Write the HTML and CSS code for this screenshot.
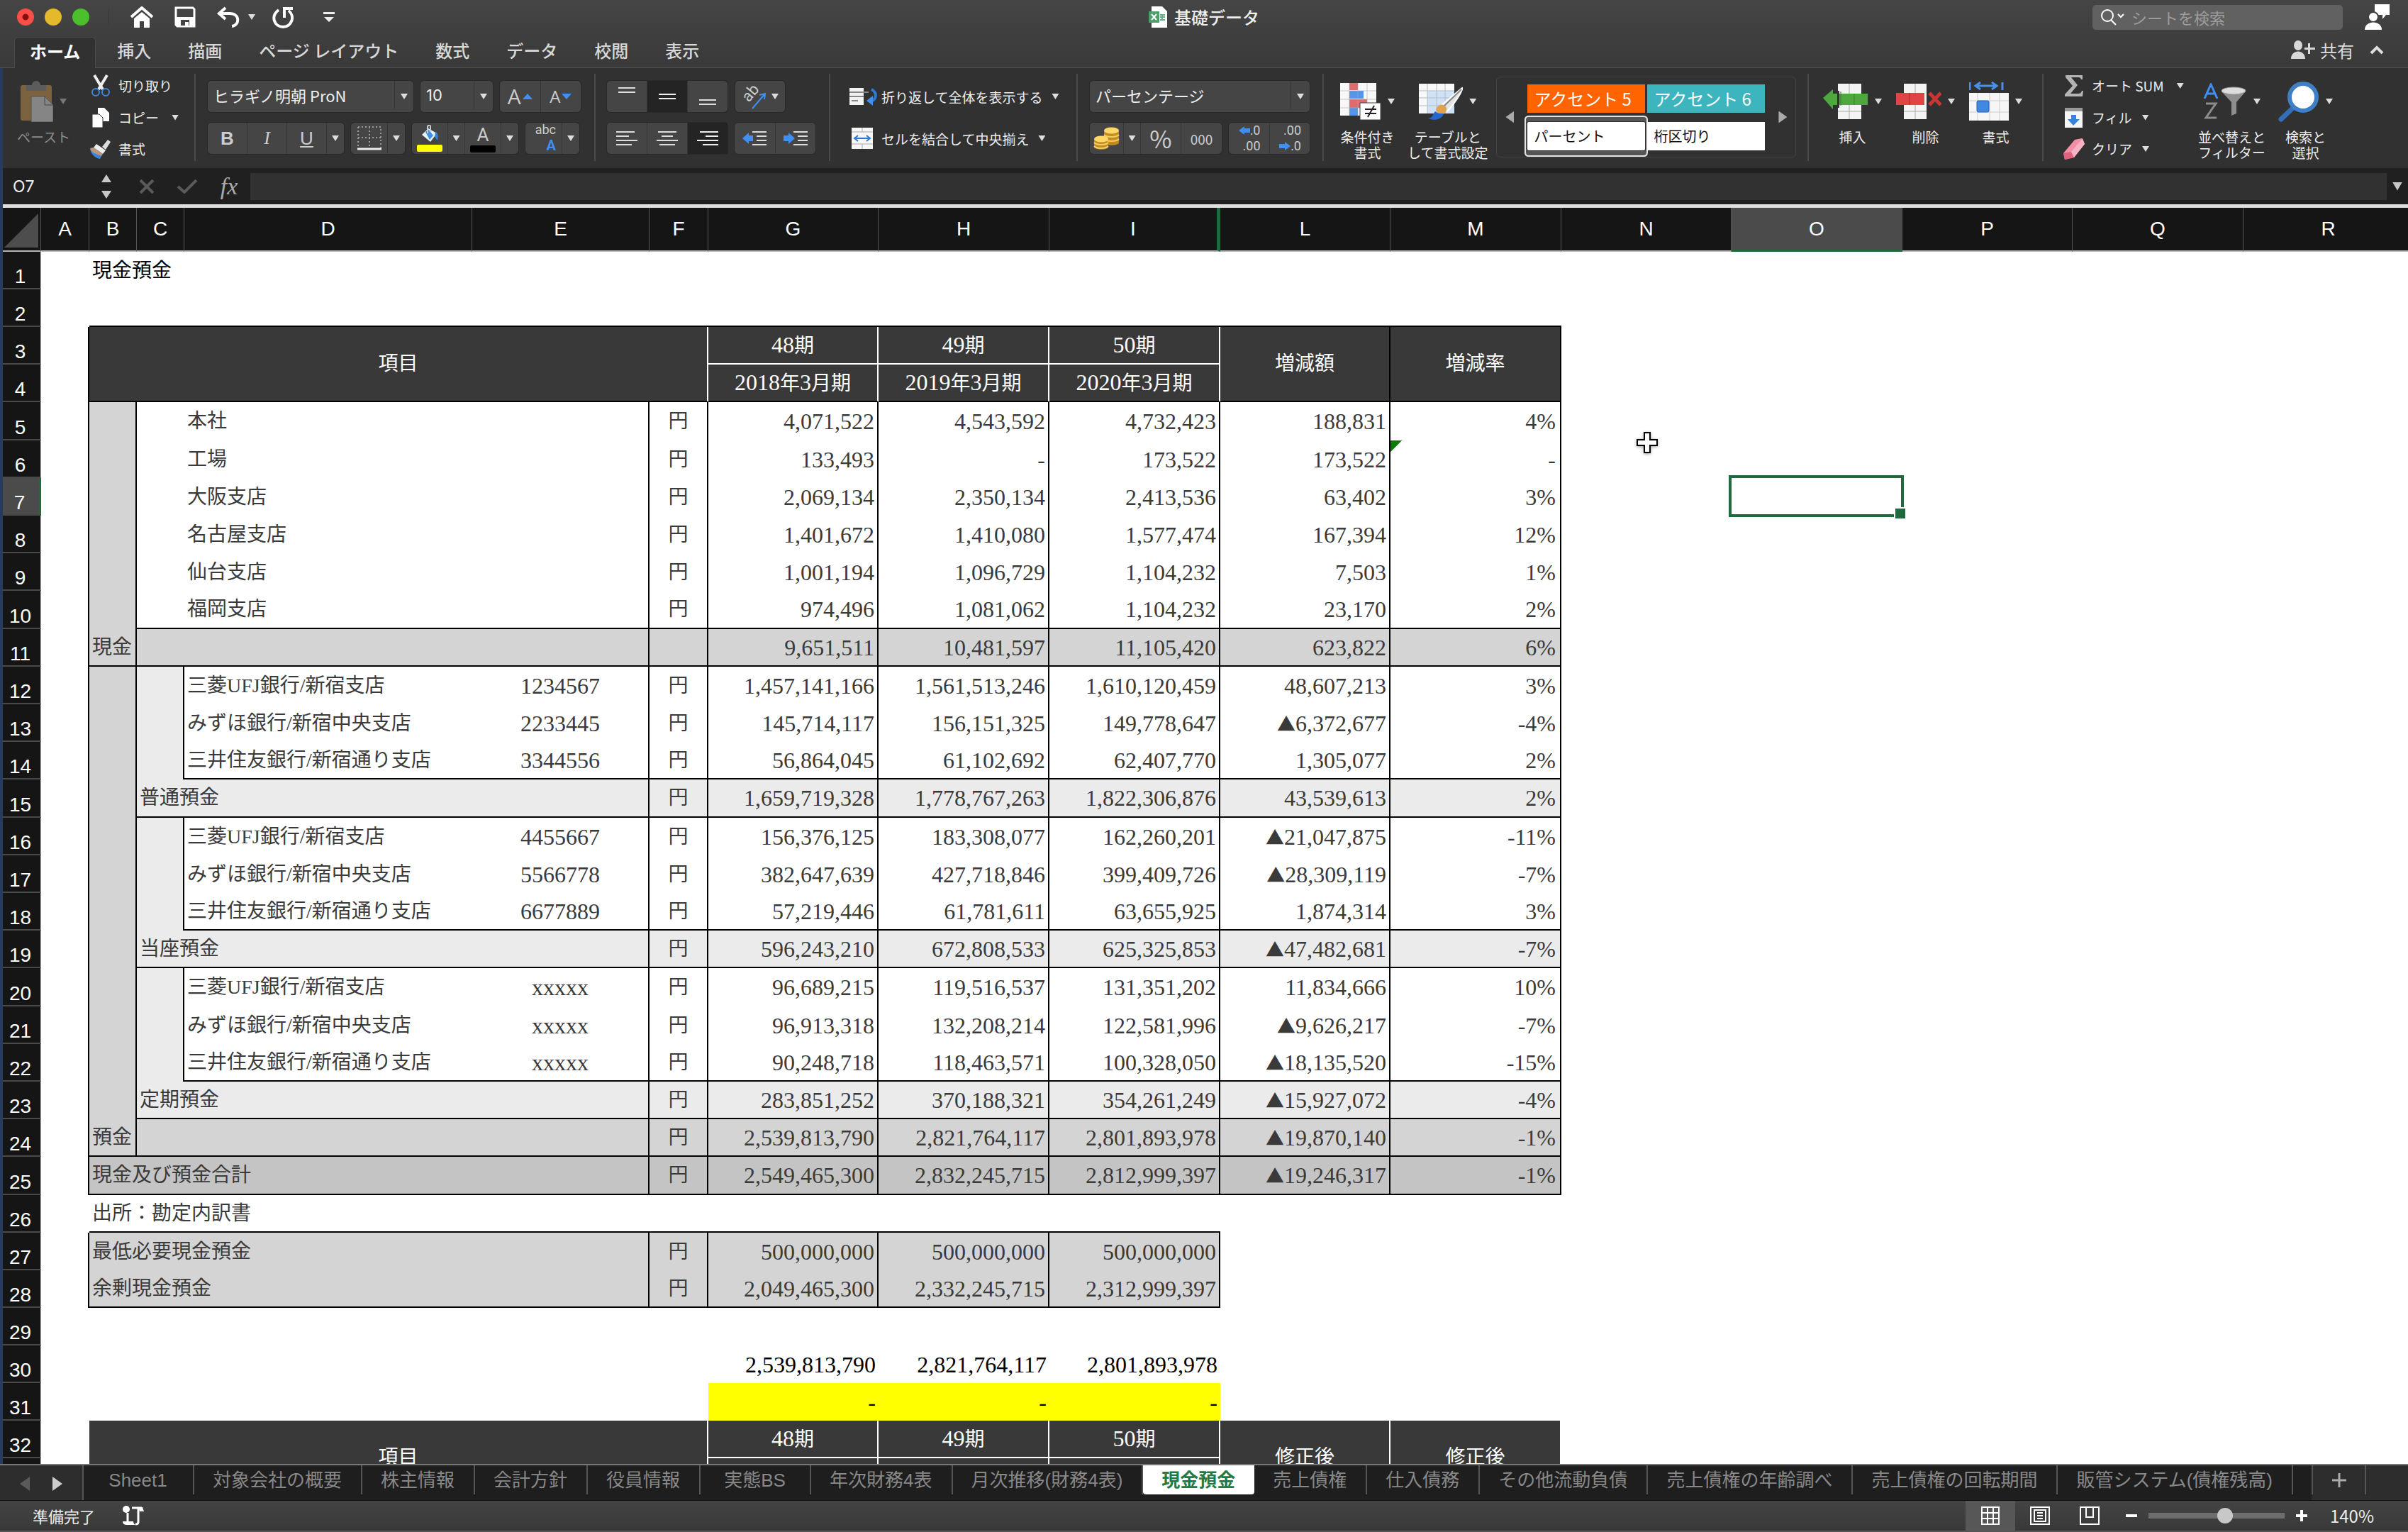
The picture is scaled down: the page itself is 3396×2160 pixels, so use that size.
FILE: index.html
```html
<!DOCTYPE html>
<html lang="ja">
<head>
<meta charset="utf-8">
<title>基礎データ</title>
<link rel="stylesheet" href="styles.css">
</head>
<body>
<div class="app">
<header class="titlebar">
  <div class="quick">
    <div class="lights"><span class="light red"></span><span class="light amber"></span><span class="light green"></span></div>
    <button aria-label="ホーム"><svg width="32" height="30" viewBox="0 0 32 30"><path d="M1 15 16 2l15 13" fill="none" stroke="#fff" stroke-width="4"/><path d="M5 17 16 8l11 9v13h-8v-9h-6v9H5z" fill="#fff"/></svg></button>
    <button aria-label="保存"><svg width="30" height="30" viewBox="0 0 30 30"><path d="M3 2h23l2 2v24H4l-2-2V2z" fill="none" stroke="#fff" stroke-width="3"/><path d="M2 15h26v13H2z" fill="#fff"/><path d="M9 19h12v8H9z" fill="#444"/><path d="M15 22h5v6h-5z" fill="#fff"/></svg></button>
    <button class="with-tri" aria-label="元に戻す"><svg width="32" height="30" viewBox="0 0 32 30"><path d="M12 2 3 10l9 8M4 10h14c15 0 14 17 3 18" fill="none" stroke="#fff" stroke-width="4"/></svg><span class="tri"></span></button>
    <button aria-label="やり直し"><svg width="32" height="32" viewBox="0 0 32 32"><path d="M9 6C-3 15 3 30 15 30s18-15 8-23" fill="none" stroke="#fff" stroke-width="4"/><path d="M15 2h14v4H19v11h-4z" fill="#fff"/></svg></button>
    <button class="custom" aria-label="カスタマイズ"><svg width="16" height="16" viewBox="0 0 16 16"><path d="M0 1h16v3H0zM1 8h14l-7 7z" fill="#eee"/></svg></button>
  </div>
  <h1 class="doc"><svg width="26" height="30" viewBox="0 0 26 30"><path d="M4 0h15l7 7v23H4z" fill="#fff"/><path d="M0 7h15v16H0z" fill="#4f9d6c"/><path d="m4 11 7 8m0-8-7 8" stroke="#fff" stroke-width="2"/><path d="M16 12h7M16 15h7M16 19h7M19 11v9" stroke="#6aab82" stroke-width="2"/></svg>基礎データ</h1>
  <div class="right">
    <label class="search"><svg width="36" height="26" viewBox="0 0 36 26"><circle cx="11" cy="11" r="8" fill="none" stroke="#fff" stroke-width="2"/><path d="m16 17 7 7M26 9l4 4 4-4" fill="none" stroke="#fff" stroke-width="2"/></svg><input type="search" placeholder="シートを検索" aria-label="シートを検索"></label>
    <button aria-label="アカウント"><svg width="36" height="36" viewBox="0 0 36 36"><path d="M14 0h21v15h-5l-5 6v-6H14z" fill="#fff"/><circle cx="12" cy="18" r="7" fill="#fff" stroke="#414141" stroke-width="2"/><path d="M0 36c0-14 24-14 24 0z" fill="#fff"/></svg></button>
  </div>
</header>
<nav class="ribbon-tabs">
  <a class="rtab on" href="#home">ホーム</a><a class="rtab" href="#insert">挿入</a><a class="rtab" href="#draw">描画</a><a class="rtab" href="#layout">ページ レイアウト</a><a class="rtab" href="#formula">数式</a><a class="rtab" href="#data">データ</a><a class="rtab" href="#review">校閲</a><a class="rtab" href="#view">表示</a>
  <button class="share"><svg width="34" height="26" viewBox="0 0 34 26"><ellipse cx="10" cy="7" rx="6" ry="7" fill="#d8d8d8"/><path d="M0 26c0-14 20-14 20 0zM24 4h3v6h7v3h-7v6h-3v-6h-5v-3h5z" fill="#d8d8d8"/></svg>共有</button>
  <button class="fold" aria-label="リボンを折りたたむ"><svg width="20" height="14" viewBox="0 0 20 14"><path d="m2 12 8-8 8 8" fill="none" stroke="#ddd" stroke-width="4"/></svg></button>
</nav>
<main class="work">
<section class="ribbon">
  <div class="group clip">
    <button class="big dim"><span class="top"><svg width="46" height="58" viewBox="0 0 46 58"><rect y="6" width="44" height="50" rx="3" fill="#7d6240"/><path d="M8 6h8a6 6 0 0 1 12 0h8v8H8z" fill="#5c5c5c"/><path d="M15 22h19l12 12v24H15z" fill="#858585" stroke="#555"/><path d="M34 22v12h12" fill="none" stroke="#444"/></svg><span class="tri"></span></span>ペースト</button>
    <div class="list">
      <button><svg width="28" height="32" viewBox="0 0 28 32"><path d="m5 1 12 20M23 1 11 21" stroke="#eee" stroke-width="4"/><circle cx="7" cy="25" r="5" fill="none" stroke="#3f87dd" stroke-width="2"/><circle cx="21" cy="25" r="5" fill="none" stroke="#3f87dd" stroke-width="2"/></svg>切り取り</button>
      <button><svg width="28" height="28" viewBox="0 0 28 28"><path d="M10 0h9l7 7v12H10z" fill="#fff"/><path d="M2 9h10l5 5v14H2z" fill="#fff" stroke="#333"/></svg>コピー<span class="tri far"></span></button>
      <button><svg width="30" height="28" viewBox="0 0 30 28"><path d="m17 11 8-10 4 3-7 11z" fill="#ddd"/><path d="m9 7 13 9-4 5L5 12z" fill="#eee"/><path d="m5 12 13 9-4 6C8 26 2 22 0 13z" fill="#b9977c"/><path d="M0 13c3 8 8 7 16 11l-2 4C8 27 1 22 0 13z" fill="#3b85dd"/></svg>書式</button>
    </div>
  </div>
  <div class="group font">
    <div class="line">
      <div class="combo name"><select aria-label="フォント"><option>ヒラギノ明朝 ProN</option></select></div>
      <div class="combo size"><select aria-label="フォント サイズ"><option>10</option></select></div>
      <div class="seg w114"><button aria-label="拡大" class="letter">A<svg width="14" height="8" viewBox="0 0 14 8"><path d="M0 8 7 0l7 8z" fill="#3f8ff5"/></svg></button><button aria-label="縮小" class="letter small">A<svg width="14" height="8" viewBox="0 0 14 8"><path d="M0 0h14L7 8z" fill="#3f8ff5"/></svg></button></div>
    </div>
    <div class="line">
      <div class="seg biu"><button class="glyph"><b>B</b></button><button class="glyph"><i>I</i></button><button class="glyph"><u>U</u></button><button class="drop" aria-label="下線"><span class="tri"></span></button></div>
      <div class="seg w76"><button aria-label="罫線"><svg width="34" height="34" viewBox="0 0 34 34"><path d="M1 1h32v30M1 1v30M17 1v30M1 16h32" fill="none" stroke="#999" stroke-width="2" stroke-dasharray="2 3"/><path d="M0 32h34" stroke="#eee" stroke-width="3"/></svg></button><button class="drop" aria-label="罫線の種類"><span class="tri"></span></button></div>
      <div class="seg w150"><button aria-label="塗りつぶし"><svg width="36" height="38" viewBox="0 0 36 38"><path d="m7 14 9-9 12 7-9 12z" fill="#e8f2fb"/><path d="m12 10 6 11 5-6-7-9z" fill="#3f8fe8"/><path d="M15 12V2q3-3 4 0v8" fill="none" stroke="#ccc" stroke-width="2"/><path d="M26 10c4 1 4 6 3 12l-4-5z" fill="#3382dc"/><rect y="28" width="36" height="10" rx="2" fill="#ff0"/></svg></button><button class="drop" aria-label="塗りつぶしの色"><span class="tri"></span></button><button class="color-a" aria-label="文字色">A<span class="black-bar"></span></button><button class="drop" aria-label="文字の色"><span class="tri"></span></button></div>
      <div class="seg w76"><button class="abc" aria-label="ふりがな"><span>abc</span><b>A</b></button><button class="drop" aria-label="ふりがなの設定"><span class="tri"></span></button></div>
    </div>
  </div>
  <div class="group align">
    <div class="line">
      <div class="seg w170"><button aria-label="上揃え"><svg width="24" height="34" viewBox="0 0 24 34"><path d="M0 5h24M0 11h24" stroke="#ddd" stroke-width="2"/></svg></button><button class="on" aria-label="上下中央揃え"><svg width="24" height="34" viewBox="0 0 24 34"><path d="M0 14h24M0 20h24" stroke="#eee" stroke-width="2"/></svg></button><button aria-label="下揃え"><svg width="24" height="34" viewBox="0 0 24 34"><path d="M0 22h24M0 28h24" stroke="#ddd" stroke-width="2"/></svg></button></div>
      <div class="seg w70"><button class="orient" aria-label="方向"><svg width="36" height="38" viewBox="0 0 36 38"><text x="10" y="28" transform="rotate(-50 10 28)" font-size="22" fill="#ccc">ab</text><path d="M15 36 33 15M25 17l8-2-1 8" fill="none" stroke="#3f8ff5" stroke-width="2"/></svg><span class="tri"></span></button></div>
    </div>
    <div class="line">
      <div class="seg w170"><button aria-label="左揃え"><svg width="30" height="24" viewBox="0 0 30 24"><path d="M0 3h26M0 9h18M0 15h30M0 21h22" stroke="#ddd" stroke-width="2"/></svg></button><button aria-label="中央揃え"><svg width="30" height="24" viewBox="0 0 30 24"><path d="M2 3h26M7 9h16M0 15h30M4 21h22" stroke="#ddd" stroke-width="2"/></svg></button><button class="on" aria-label="右揃え"><svg width="30" height="24" viewBox="0 0 30 24"><path d="M4 3h26M12 9h18M0 15h30M8 21h22" stroke="#eee" stroke-width="2"/></svg></button></div>
      <div class="seg w114"><button aria-label="インデント解除"><svg width="34" height="24" viewBox="0 0 34 24"><path d="M14 3h20M20 9h14M20 15h14M14 21h20" stroke="#ddd" stroke-width="2"/><path d="m0 12 9-8v4h6v8H9v4z" fill="#3f8ff5"/></svg></button><button aria-label="インデント"><svg width="34" height="24" viewBox="0 0 34 24"><path d="M14 3h20M20 9h14M20 15h14M14 21h20" stroke="#ddd" stroke-width="2"/><path d="m16 12-9-8v4H0v8h7v4z" fill="#3f8ff5"/></svg></button></div>
    </div>
  </div>
  <div class="group wrap">
    <button class="text-btn"><svg width="40" height="28" viewBox="0 0 40 28"><path d="M0 2h20v24H0z" fill="#f2f2f2"/><path d="M0 8h27M0 14h20M3 20h9" stroke="#888" stroke-width="2"/><path d="M31 4c8 4 8 14-1 17" fill="none" stroke="#2f7ad0" stroke-width="4"/><path d="m24 20 9-7v14z" fill="#3f8ff5"/></svg>折り返して全体を表示する<span class="tri"></span></button>
    <button class="text-btn"><svg width="40" height="32" viewBox="0 0 40 32"><path d="M3 1h30v30H3z" fill="#f6f6f6"/><path d="M3 7h30M3 24h30M18 1v6M18 24v7" stroke="#aaa"/><path d="M9 16h18M12 12l-5 4 5 4M24 12l5 4-5 4" fill="none" stroke="#2f7ad0" stroke-width="2"/></svg>セルを結合して中央揃え<span class="tri"></span></button>
  </div>
  <div class="group number">
    <div class="line"><div class="combo format"><select aria-label="表示形式"><option>パーセンテージ</option></select></div></div>
    <div class="line">
      <div class="seg w186"><button aria-label="通貨"><svg width="38" height="32" viewBox="0 0 38 32"><path d="M15 5v17c0 5 21 5 21 0V5z" fill="#c48b1c"/><path d="M1 17v11c0 5 20 5 20 0V17z" fill="#c48b1c"/><path d="M15 11c4 4 17 4 21 0M15 17c4 4 17 4 21 0M1 22c4 4 16 4 20 0M1 27c4 4 16 4 20 0" fill="none" stroke="#f4cf66" stroke-width="2"/><ellipse cx="25.500" cy="5" rx="10.500" ry="4.500" fill="#ffd866"/><ellipse cx="11" cy="17" rx="10" ry="4.500" fill="#ffd866"/></svg></button><button class="drop" aria-label="通貨の種類"><span class="tri"></span></button><button class="pct w57">%</button><button class="zeros w57">000</button></div>
      <div class="seg w114"><button class="dec"><span><svg width="16" height="12" viewBox="0 0 16 12"><path d="m0 6 8-6v3h8v6H8v3z" fill="#3f8ff5"/></svg>.0</span><span>.00</span></button><button class="dec"><span>.00</span><span><svg width="16" height="12" viewBox="0 0 16 12"><path d="M16 6 8 0v3H0v6h8v3z" fill="#3f8ff5"/></svg>.0</span></button></div>
    </div>
  </div>
  <div class="group styles">
    <button class="big"><span class="top"><svg width="58" height="54" viewBox="0 0 58 54"><path d="M0 1h51v46H0z" fill="#f8f8f8"/><path d="M13 1h12v10H13zM13 24h25v12H13z" fill="#e06a6c"/><path d="M13 12h20v11H13zM13 36h12v11H13z" fill="#5796e4"/><path d="M0 12h51M0 24h51M0 36h51M13 1v46M25 1v46M38 1v46" stroke="#aaa" opacity=".6"/><path d="M28 29h29v24H28z" fill="#fff" stroke="#444"/><path d="M35 38h16M35 44h16M48 33l-9 16" stroke="#222" stroke-width="2"/></svg><span class="tri"></span></span>条件付き<br>書式</button>
    <button class="big"><span class="top"><svg width="62" height="54" viewBox="0 0 62 54"><path d="M0 2h50v42H0z" fill="#f8f8f8"/><path d="M12 12h38v32H12z" fill="#cfe2f7"/><path d="M0 12h50M0 22h50M0 33h50M12 2v42M25 2v42M37 2v42" stroke="#b5bcc4"/><path d="M31 33 61 8c2 4-14 26-21 33z" fill="#e4e4e4" stroke="#fff" stroke-width="2"/><path d="m35 34 25-24" stroke="#888" stroke-width="2"/><path d="M24 39c3-10 12-9 15-3 1 6-3 10-10 10z" fill="#e0a352"/><path d="M13 51c7-1 7-7 10-10 5 4 8 3 12 3-2 8-12 11-22 7z" fill="#2468cf"/></svg><span class="tri"></span></span>テーブルと<br>して書式設定</button>
    <div class="gallery"><button class="arrow left" aria-label="前へ"></button>
      <div class="swatches"><button class="sw orange">アクセント 5</button><button class="sw teal">アクセント 6</button><button class="sw plain sel">パーセント</button><button class="sw plain">桁区切り</button></div>
      <button class="arrow rightward" aria-label="次へ"></button></div>
  </div>
  <div class="group cells">
    <button class="big"><span class="top"><svg width="64" height="52" viewBox="0 0 64 52"><path d="M21 1h33v50H21z" fill="#f4f4f4"/><path d="M37 1v50M21 40h33" stroke="#aaa"/><path d="m0 21 14-12v6h49v16H14v6z" fill="#4fa83e"/><path d="M25 12v20M44 15v16" stroke="#3a7f2e" stroke-width="1"/><path d="M20 11h3v24h-3z" fill="#313131"/></svg><span class="tri"></span></span>挿入</button>
    <button class="big"><span class="top"><svg width="64" height="52" viewBox="0 0 64 52"><path d="M11 1h32v50H11z" fill="#f4f4f4"/><path d="M27 1v50M11 40h32" stroke="#aaa"/><path d="M0 14h40v17H0z" fill="#e04444"/><path d="M19 14v17" stroke="#a92c2c"/><path d="m47 14 16 17M63 14 47 31" stroke="#c93434" stroke-width="5"/></svg><span class="tri"></span></span>削除</button>
    <button class="big"><span class="top"><svg width="56" height="56" viewBox="0 0 56 56"><path d="M1 1v11M47 1v11" stroke="#4a90e8" stroke-width="3"/><path d="M10 6h28M16 1 9 6l7 5M32 1l7 5-7 5" fill="none" stroke="#4a90e8" stroke-width="3"/><path d="M0 16h56v39H0z" fill="#f6f6f6"/><path d="M0 27h56M0 43h56M12 16v39M29 16v39M43 16v39" stroke="#ccc"/><rect x="11" y="27" width="17" height="16" rx="2" fill="#4088e0" stroke="#2463b4"/></svg><span class="tri"></span></span>書式</button>
  </div>
  <div class="group editing">
    <div class="list wide">
      <button><svg width="26" height="32" viewBox="0 0 26 32"><path d="M1 1h24v6h-2c-1-3-2-3-5-3H9l9 11L8 27h10c4 0 5-1 6-4h2l-1 8H0v-3l11-12L1 4z" fill="#b4b4b4"/></svg>オート SUM<span class="tri far"></span></button>
      <button><svg width="26" height="30" viewBox="0 0 26 30"><path d="M0 1h25v28H0z" fill="#f6f6f6"/><path d="M0 1h25v5H0z" fill="#999"/><path d="M9 11h7v6h5l-9 9-8-9h5z" fill="#3583dd"/></svg>フィル<span class="tri"></span></button>
      <button><svg width="30" height="32" viewBox="0 0 30 32"><path d="m16 3 10-2 4 8-15 19-13 3-2-9z" fill="#f48da6"/><path d="m0 22 11-2 4 8-13 3z" fill="#e0607f"/><path d="m11 20 16-19 3 8-15 19z" fill="#f7b3c3"/></svg>クリア<span class="tri"></span></button>
    </div>
    <button class="big"><span class="top"><svg width="62" height="52" viewBox="0 0 62 52"><path d="M2 22 11 2l9 20M5 15h12" fill="none" stroke="#3f8ff5" stroke-width="3"/><path d="M4 29h14L4 49h15" fill="none" stroke="#8c8c8c" stroke-width="3"/><path d="M26 12c0-5 34-5 34 0L47 27v16l-7 3V27z" fill="#8e8e8e"/><ellipse cx="43" cy="11" rx="17" ry="5" fill="#ddd" stroke="#999"/></svg><span class="tri"></span></span>並べ替えと<br>フィルター</button>
    <button class="big"><span class="top"><svg width="58" height="58" viewBox="0 0 58 58"><path d="m22 37-18 17" stroke="#336fb8" stroke-width="7" stroke-linecap="round"/><circle cx="35" cy="23" r="19" fill="#fff" stroke="#3f7fc6" stroke-width="6"/></svg><span class="tri"></span></span>検索と<br>選択</button>
  </div>
</section>
<section class="formula">
  <input class="namebox" value="O7" aria-label="名前ボックス">
  <button class="spin" aria-label="名前の一覧"><svg width="16" height="36" viewBox="0 0 16 36"><path d="M1 12 8 1l7 11zM1 24h14L8 35z" fill="#c8c8c8"/></svg></button>
  <button class="cancel" aria-label="キャンセル"><svg width="22" height="20" viewBox="0 0 22 20"><path d="m2 1 18 18M20 1 2 19" stroke="#5a5a5a" stroke-width="4"/></svg></button>
  <button class="ok" aria-label="入力"><svg width="30" height="20" viewBox="0 0 30 20"><path d="m2 10 9 8L28 1" fill="none" stroke="#5a5a5a" stroke-width="4"/></svg></button>
  <button class="fx" aria-label="関数の挿入"><i>fx</i></button>
  <input class="fbar" aria-label="数式バー">
  <button class="expand" aria-label="数式バーの展開"></button>
</section>
<section class="sheet">
<table>
<colgroup><col class="c-row"><col class="c-a"><col class="c-b"><col class="c-b"><col class="c-d"><col class="c-e"><col class="c-f"><col class="c240"><col class="c241"><col class="c241"><col class="c240"><col class="c241"><col class="c240"><col class="c241"><col class="c240"><col class="c241"><col class="c240"></colgroup>
<thead><tr><th class="corner"><svg width="48" height="48" viewBox="0 0 48 48"><path d="M48 0v48H0z" fill="#4d4d4d"/></svg></th><th>A</th><th>B</th><th>C</th><th>D</th><th>E</th><th>F</th><th>G</th><th>H</th><th class="hidden-after">I</th><th>L</th><th>M</th><th>N</th><th class="cur">O</th><th>P</th><th>Q</th><th>R</th></tr></thead>
<tbody>
<tr><th>1</th><td></td><td colspan="4" class="ink">現金預金</td></tr>
<tr><th>2</th><td></td><td colspan="10" class="under"></td></tr>
<tr class="head"><th>3</th><td class="a"></td><td colspan="5" rowspan="2" class="kb">項目</td><td><span class="n">48</span>期</td><td><span class="n">49</span>期</td><td><span class="n">50</span>期</td><td rowspan="2" class="kb kr">増減額</td><td rowspan="2" class="kb kr">増減率</td></tr>
<tr class="head"><th>4</th><td class="a"></td><td class="kb"><span class="n">2018</span>年<span class="n">3</span>月期</td><td class="kb"><span class="n">2019</span>年<span class="n">3</span>月期</td><td class="kb"><span class="n">2020</span>年<span class="n">3</span>月期</td></tr>
<tr class="t tall"><th>5</th><td class="a"></td><td class="b"></td><td class="blank"></td><td colspan="2">本社</td><td class="u">円</td><td class="r">4,071,522</td><td class="r">4,543,592</td><td class="r">4,732,423</td><td class="r">188,831</td><td class="r p">4%</td></tr>
<tr class="t"><th>6</th><td class="a"></td><td class="b"></td><td class="blank"></td><td colspan="2">工場</td><td class="u">円</td><td class="r">133,493</td><td class="r">-</td><td class="r">173,522</td><td class="r">173,522</td><td class="r p flag">-</td><td class="free host"><svg class="cursor" width="34" height="34" viewBox="0 0 34 34"><path d="M13 3h8v10h10v8H21v10h-8V21H3v-8h10z" fill="#fff" stroke="#000" stroke-width="2"/></svg></td></tr>
<tr class="t"><th class="cur">7</th><td class="a"></td><td class="b"></td><td class="blank"></td><td colspan="2">大阪支店</td><td class="u">円</td><td class="r">2,069,134</td><td class="r">2,350,134</td><td class="r">2,413,536</td><td class="r">63,402</td><td class="r p">3%</td><td class="free"></td><td class="free host"><div class="selection"></div></td></tr>
<tr class="t"><th>8</th><td class="a"></td><td class="b"></td><td class="blank"></td><td colspan="2">名古屋支店</td><td class="u">円</td><td class="r">1,401,672</td><td class="r">1,410,080</td><td class="r">1,577,474</td><td class="r">167,394</td><td class="r p">12%</td></tr>
<tr class="t"><th>9</th><td class="a"></td><td class="b"></td><td class="blank"></td><td colspan="2">仙台支店</td><td class="u">円</td><td class="r">1,001,194</td><td class="r">1,096,729</td><td class="r">1,104,232</td><td class="r">7,503</td><td class="r p">1%</td></tr>
<tr class="t tall rule"><th>10</th><td class="a"></td><td class="b nb"></td><td class="blank"></td><td colspan="2">福岡支店</td><td class="u">円</td><td class="r">974,496</td><td class="r">1,081,062</td><td class="r">1,104,232</td><td class="r">23,170</td><td class="r p">2%</td></tr>
<tr class="t rule mid"><th>11</th><td class="a"></td><td>現金</td><td colspan="3"></td><td></td><td class="r">9,651,511</td><td class="r">10,481,597</td><td class="r">11,105,420</td><td class="r">623,822</td><td class="r p">6%</td></tr>
<tr class="t"><th>12</th><td class="a"></td><td class="b"></td><td class="c"></td><td class="blank">三菱UFJ銀行/新宿支店</td><td class="u no">1234567</td><td class="u">円</td><td class="r">1,457,141,166</td><td class="r">1,561,513,246</td><td class="r">1,610,120,459</td><td class="r">48,607,213</td><td class="r p">3%</td></tr>
<tr class="t"><th>13</th><td class="a"></td><td class="b"></td><td class="c"></td><td class="blank">みずほ銀行/新宿中央支店</td><td class="u no">2233445</td><td class="u">円</td><td class="r">145,714,117</td><td class="r">156,151,325</td><td class="r">149,778,647</td><td class="r"><span class="neg">▲</span>6,372,677</td><td class="r p">-4%</td></tr>
<tr class="t rule"><th>14</th><td class="a"></td><td class="b nb"></td><td class="c nb"></td><td class="blank">三井住友銀行/新宿通り支店</td><td class="u no">3344556</td><td class="u">円</td><td class="r">56,864,045</td><td class="r">61,102,692</td><td class="r">62,407,770</td><td class="r">1,305,077</td><td class="r p">2%</td></tr>
<tr class="t tall rule light"><th>15</th><td class="a"></td><td class="b nb"></td><td colspan="3">普通預金</td><td class="u">円</td><td class="r">1,659,719,328</td><td class="r">1,778,767,263</td><td class="r">1,822,306,876</td><td class="r">43,539,613</td><td class="r p">2%</td></tr>
<tr class="t"><th>16</th><td class="a"></td><td class="b"></td><td class="c"></td><td class="blank">三菱UFJ銀行/新宿支店</td><td class="u no">4455667</td><td class="u">円</td><td class="r">156,376,125</td><td class="r">183,308,077</td><td class="r">162,260,201</td><td class="r"><span class="neg">▲</span>21,047,875</td><td class="r p">-11%</td></tr>
<tr class="t"><th>17</th><td class="a"></td><td class="b"></td><td class="c"></td><td class="blank">みずほ銀行/新宿中央支店</td><td class="u no">5566778</td><td class="u">円</td><td class="r">382,647,639</td><td class="r">427,718,846</td><td class="r">399,409,726</td><td class="r"><span class="neg">▲</span>28,309,119</td><td class="r p">-7%</td></tr>
<tr class="t rule"><th>18</th><td class="a"></td><td class="b nb"></td><td class="c nb"></td><td class="blank">三井住友銀行/新宿通り支店</td><td class="u no">6677889</td><td class="u">円</td><td class="r">57,219,446</td><td class="r">61,781,611</td><td class="r">63,655,925</td><td class="r">1,874,314</td><td class="r p">3%</td></tr>
<tr class="t rule light"><th>19</th><td class="a"></td><td class="b nb"></td><td colspan="3">当座預金</td><td class="u">円</td><td class="r">596,243,210</td><td class="r">672,808,533</td><td class="r">625,325,853</td><td class="r"><span class="neg">▲</span>47,482,681</td><td class="r p">-7%</td></tr>
<tr class="t tall"><th>20</th><td class="a"></td><td class="b"></td><td class="c"></td><td class="blank">三菱UFJ銀行/新宿支店</td><td class="u no">xxxxx</td><td class="u">円</td><td class="r">96,689,215</td><td class="r">119,516,537</td><td class="r">131,351,202</td><td class="r">11,834,666</td><td class="r p">10%</td></tr>
<tr class="t"><th>21</th><td class="a"></td><td class="b"></td><td class="c"></td><td class="blank">みずほ銀行/新宿中央支店</td><td class="u no">xxxxx</td><td class="u">円</td><td class="r">96,913,318</td><td class="r">132,208,214</td><td class="r">122,581,996</td><td class="r"><span class="neg">▲</span>9,626,217</td><td class="r p">-7%</td></tr>
<tr class="t rule"><th>22</th><td class="a"></td><td class="b nb"></td><td class="c nb"></td><td class="blank">三井住友銀行/新宿通り支店</td><td class="u no">xxxxx</td><td class="u">円</td><td class="r">90,248,718</td><td class="r">118,463,571</td><td class="r">100,328,050</td><td class="r"><span class="neg">▲</span>18,135,520</td><td class="r p">-15%</td></tr>
<tr class="t rule light"><th>23</th><td class="a"></td><td class="b nb"></td><td colspan="3">定期預金</td><td class="u">円</td><td class="r">283,851,252</td><td class="r">370,188,321</td><td class="r">354,261,249</td><td class="r"><span class="neg">▲</span>15,927,072</td><td class="r p">-4%</td></tr>
<tr class="t rule mid"><th>24</th><td class="a"></td><td>預金</td><td colspan="3"></td><td class="u">円</td><td class="r">2,539,813,790</td><td class="r">2,821,764,117</td><td class="r">2,801,893,978</td><td class="r"><span class="neg">▲</span>19,870,140</td><td class="r p">-1%</td></tr>
<tr class="t tall rule total"><th>25</th><td class="a"></td><td colspan="4">現金及び預金合計</td><td class="u">円</td><td class="r">2,549,465,300</td><td class="r">2,832,245,715</td><td class="r">2,812,999,397</td><td class="r"><span class="neg">▲</span>19,246,317</td><td class="r p">-1%</td></tr>
<tr><th>26</th><td></td><td colspan="8" class="under">出所：勘定内訳書</td></tr>
<tr class="t mid"><th>27</th><td class="a"></td><td colspan="4">最低必要現金預金</td><td class="u">円</td><td class="r">500,000,000</td><td class="r">500,000,000</td><td class="r">500,000,000</td></tr>
<tr class="t rule mid"><th>28</th><td class="a"></td><td colspan="4">余剰現金預金</td><td class="u">円</td><td class="r">2,049,465,300</td><td class="r">2,332,245,715</td><td class="r">2,312,999,397</td></tr>
<tr><th>29</th><td></td></tr>
<tr><th>30</th><td></td><td colspan="5"></td><td class="r ink">2,539,813,790</td><td class="r ink">2,821,764,117</td><td class="r ink">2,801,893,978</td></tr>
<tr><th>31</th><td></td><td colspan="5"></td><td class="r ink yellow">-</td><td class="r ink yellow">-</td><td class="r ink yellow">-</td></tr>
<tr class="head second"><th>32</th><td class="a"></td><td colspan="5" rowspan="2">項目</td><td><span class="n">48</span>期</td><td><span class="n">49</span>期</td><td><span class="n">50</span>期</td><td rowspan="2">修正後</td><td rowspan="2">修正後</td></tr>
<tr class="head second"><th></th><td class="a"></td><td></td><td></td><td></td></tr>
</tbody>
</table>
</section>
</main>
<nav class="sheets">
  <div class="pager"><button class="arrow left off" aria-label="前のシート"></button><button class="arrow rightward" aria-label="次のシート"></button></div>
  <div class="tabs"><button>Sheet1</button><button>対象会社の概要</button><button>株主情報</button><button>会計方針</button><button>役員情報</button><button>実態BS</button><button>年次財務4表</button><button>月次推移(財務4表)</button><button class="on">現金預金</button><button>売上債権</button><button>仕入債務</button><button>その他流動負債</button><button>売上債権の年齢調べ</button><button>売上債権の回転期間</button><button>販管システム(債権残高)</button></div>
  <button class="add" aria-label="シートの追加"><svg width="20" height="20" viewBox="0 0 20 20"><path d="M10 0v20M0 10h20" stroke="#aaa" stroke-width="3"/></svg></button>
  <div class="rest"></div>
</nav>
<footer class="status">
  <span>準備完了</span>
  <button class="macro" aria-label="マクロの記録"><svg width="30" height="28" viewBox="0 0 30 28"><circle cx="5" cy="5" r="5" fill="#fff"/><path d="M13 3h14M22 3v20q0 3-4 3M7 10v12" fill="none" stroke="#fff" stroke-width="3"/><path d="M22 2h6l2 6h-6zM0 22h15q0 5 5 5H6q-6 0-6-5z" fill="#fff"/></svg></button>
  <div class="views">
    <button class="on" aria-label="標準"><svg width="26" height="26" viewBox="0 0 26 26"><path d="M1 1h24v24H1zM9 1v24M17 1v24M1 9h24M1 17h24" fill="none" stroke="#fff" stroke-width="2"/></svg></button>
    <button aria-label="ページ レイアウト"><svg width="28" height="26" viewBox="0 0 28 26"><path d="M1 1h26v24H1zM6 5h16v16H6zM10 9h8M10 13h8M10 17h8" fill="none" stroke="#fff" stroke-width="2"/></svg></button>
    <button aria-label="改ページ"><svg width="28" height="26" viewBox="0 0 28 26"><path d="M1 1h26v24H1zM9 1v14h10V1" fill="none" stroke="#fff" stroke-width="2"/></svg></button>
  </div>
  <button class="zoom-btn" aria-label="縮小"><svg width="16" height="16" viewBox="0 0 16 16"><path d="M0 8h16" stroke="#fff" stroke-width="4"/></svg></button>
  <input class="zoom" type="range" min="10" max="238" value="140" aria-label="ズーム">
  <button class="zoom-btn" aria-label="拡大"><svg width="16" height="16" viewBox="0 0 16 16"><path d="M0 8h16M8 0v16" stroke="#fff" stroke-width="4"/></svg></button>
  <output>140%</output>
</footer>
</div>
</body>
</html>
```
FILE: styles.css
```css
* { box-sizing: border-box; }
body { margin: 0; background: #111; color: #eee; font-family: "Noto Sans CJK JP", "Noto Sans", sans-serif; font-size: 24px; white-space: nowrap; }
button, input, select { font: inherit; color: inherit; background: none; border: 0; padding: 0; margin: 0; border-radius: 0; white-space: nowrap; }
a { color: inherit; text-decoration: none; }
svg { display: block; flex: none; }
.app { display: flex; flex-direction: column; height: 100vh; overflow: hidden; background: #3b3b3b; }
.tri { flex: none; width: 10px; height: 8px; background: #ddd; clip-path: polygon(0 0, 100% 0, 50% 100%); }

/* Title bar */
.titlebar { display: grid; grid-template-columns: 1fr auto 1fr; align-items: center; height: 48px; flex: none; background: linear-gradient(#454545, #3f3f3f); }
.quick { display: flex; align-items: center; padding-left: 24px; gap: 30px; }
.quick button { height: 32px; display: flex; align-items: center; }
.lights { display: flex; gap: 15px; padding-right: 27px; border-right: 1px solid #383838; }
.light { width: 24px; height: 24px; border-radius: 50%; }
.red { background: radial-gradient(circle, #8c0f0c 0 4px, #fc4f4a 5px); }
.amber { background: #e6b82c; }
.green { background: #4cbf2d; }
.quick .with-tri { gap: 12px; margin-right: -6px; }
.custom { margin-left: 10px; }
.doc { display: flex; align-items: center; gap: 10px; margin: 0; font-size: 24px; font-weight: 500; line-height: 36px; }
.right { display: flex; justify-content: flex-end; align-items: center; gap: 31px; padding-right: 25px; }
.search { display: flex; align-items: center; gap: 9px; width: 353px; height: 35px; padding-left: 10px; background: #616161; border-radius: 5px; }
.search input { flex: 1; min-width: 0; font-size: 22px; line-height: 32px; outline: 0; }
.search input::placeholder { color: #9c9c9c; opacity: 1; }

/* Ribbon tabs */
.ribbon-tabs { display: flex; align-items: stretch; height: 48px; flex: none; padding: 4px 30px 0 20px; gap: 8px; background: linear-gradient(#3f3f3f, #393939); box-shadow: inset 0 -1px #505050; }
.rtab { padding: 0 22px; line-height: 38px; color: #d8d8d8; font-weight: 500; }
.rtab.on { color: #fff; font-weight: 700; background: #313131; border: 1px solid #4a4a4a; border-bottom: 0; border-radius: 6px 6px 0 0; padding: 0 21px; }
.share { display: flex; align-items: center; gap: 7px; margin-left: auto; height: 36px; color: #ddd; }
.fold { padding: 0 4px 8px 14px; display: flex; align-items: center; }

/* Ribbon */
.work { flex: 1; min-height: 0; display: flex; flex-direction: column; border-left: 4px solid #253c5f; }
.ribbon { display: flex; flex: none; height: 141px; padding: 8px 0 10px; background: #313131; font-size: 19px; }
.group { display: flex; flex: none; border-right: 2px solid #4b4b4b; height: 123px; }
.group:last-child { border: 0; }
.ribbon button { display: flex; align-items: center; }
.ribbon .big { flex-direction: column; line-height: 22px; text-align: center; }
.big .top { display: flex; align-items: center; gap: 9px; height: 78px; }
.dim { color: #8c8c8c; }
.dim .tri { background: #777; }
.clip { width: 272px; padding-left: 20px; gap: 28px; }
.list { display: flex; flex-direction: column; justify-content: space-between; }
.list button { height: 34px; gap: 10px; line-height: 28px; }
.list .tri { margin-left: 4px; }
.list svg { width: 30px; }
.font, .align, .number { flex-direction: column; padding-top: 10px; gap: 15px; }
.line { display: flex; gap: 10px; }
.font { width: 564px; padding-left: 17px; }
.align { width: 331px; padding-left: 16px; }
.number { width: 347px; padding-left: 17px; }
.combo { position: relative; height: 44px; border-radius: 5px; background: #454545; font-size: 22px; box-shadow: 0 0 0 1px #292929; }
.combo select { appearance: none; width: 100%; height: 44px; padding: 0 30px 4px 8px; line-height: 36px; outline: 0; }
.combo::before { content: ""; position: absolute; right: 26px; top: 0; bottom: 5px; width: 1px; background: #333; }
.combo::after { content: ""; position: absolute; right: 8px; top: 18px; width: 10px; height: 8px; background: #ddd; clip-path: polygon(0 0, 100% 0, 50% 100%); pointer-events: none; }
.name { width: 290px; }
.size { width: 102px; font-family: Inter, sans-serif; }
.format { width: 310px; }
.seg { display: flex; height: 44px; border-radius: 5px; background: #454545; box-shadow: 0 0 0 1px #292929; }
.seg button { flex: 1; justify-content: center; border-right: 1px solid #363636; color: #ccc; }
.seg button:last-child { border: 0; }
.seg button.on { background: #242424; }
.seg .drop { flex: 0 0 24px; }
.w114 { width: 114px; }
.w76 { width: 76px; }
.w150 { width: 150px; }
.w170 { width: 170px; }
.w70 { width: 70px; margin-left: 1px; }
.w186 { width: 186px; }
.seg .w57 { flex: 0 0 57px; }
.biu { width: 192px; }
.letter { font-family: "Open Sans", sans-serif; font-size: 30px; gap: 2px; line-height: 40px; }
.letter.small { font-size: 24px; }
.glyph { font-family: "Liberation Sans", sans-serif; font-size: 26px; }
.glyph i { font-family: "Liberation Serif", serif; }
.seg .color-a { flex-direction: column; font-family: Roboto, sans-serif; font-size: 26px; line-height: 30px; }
.black-bar { width: 36px; height: 10px; border-radius: 2px; background: #000; }
.seg .abc { flex-direction: column; align-items: flex-end; padding-right: 8px; font-family: Roboto, sans-serif; font-size: 18px; line-height: 20px; }
.abc b { color: #3f8ff5; font-size: 20px; line-height: 24px; }
.orient { gap: 6px; font-family: Roboto, sans-serif; }
.wrap { width: 349px; flex-direction: column; padding: 10px 0 0 27px; gap: 15px; }
.text-btn { height: 44px; gap: 5px; }
.text-btn .tri { margin-left: 8px; }
.pct { font-size: 34px; line-height: 40px; }
.zeros { font-size: 19px; }
.seg .dec { flex-direction: column; align-items: flex-end; padding-right: 12px; font-family: Roboto, sans-serif; font-size: 18px; line-height: 22px; }
.dec span { display: flex; align-items: center; }
.styles { width: 684px; padding-left: 23px; gap: 18px; }
.gallery { display: flex; align-items: center; justify-content: space-between; width: 423px; height: 114px; margin: 4px 0 0 -6px; padding: 0 12px; border: 1px solid #444; border-radius: 6px; }
.arrow { flex: none; width: 12px; height: 17px; background: #aaa; }
.left { clip-path: polygon(100% 0, 100% 100%, 0 50%); }
.rightward { clip-path: polygon(0 0, 100% 50%, 0 100%); }
.swatches { display: grid; grid-template-columns: 166px 166px; grid-auto-rows: 40px; gap: 13px 3px; }
.sw { padding-left: 9px; font-size: 24px; line-height: 36px; color: #fff; }
.orange { background: #ff6400; }
.teal { background: #3db5bf; }
.plain { background: #fff; color: #111; font-size: 20px; }
.sel { border-radius: 2px; box-shadow: 0 0 0 1px #313131, 0 -5px 0 2px #555, 0 5px 0 2px #555, 0 -5px 0 4px #e4e4e4, 0 5px 0 4px #e4e4e4; }
.cells { width: 331px; padding-left: 20px; gap: 20px; }
.editing { flex: 1; padding-left: 28px; gap: 18px; }
.list.wide { width: 172px; }
.list .far { margin-left: 8px; }

/* Formula bar */
.formula { display: flex; align-items: center; height: 51px; flex: none; background: #202020; }
.namebox { width: 130px; padding-left: 14px; font: 23px Inter, sans-serif; }
.spin { width: 28px; padding-left: 8px; }
.cancel { margin-left: 34px; width: 22px; }
.ok { margin-left: 31px; width: 30px; }
.fx { width: 30px; margin-left: 29px; font: 34px "Liberation Serif", serif; color: #aaa; line-height: 40px; }
.fbar { flex: 1; min-width: 0; height: 38px; margin-left: 15px; background: #313131; }
.expand { width: 14px; height: 12px; margin: 0 8px; background: #c8c8c8; clip-path: polygon(0 0, 100% 0, 50% 100%); }

/* Sheet */
.sheet { flex: 1; min-height: 0; overflow: hidden; background: #fff; border-top: 5px solid #dedede; color: #3a3a3a; }
table { width: 100%; table-layout: fixed; border-collapse: separate; border-spacing: 0; font-family: "Liberation Serif", "Noto Sans CJK JP", serif; font-size: 28px; }
.c-row { width: 54px; }
.c-a { width: 68px; }
.c-b { width: 67px; }
.c-d { width: 406px; }
.c-e { width: 250px; }
.c-f { width: 83px; }
.c240 { width: 240px; }
.c241 { width: 241px; }
th { background: #151515; color: #fff; padding: 0; font: 28px "Liberation Sans", sans-serif; line-height: 32px; }
thead th { height: 62px; border-right: 1px solid #555; border-bottom: 2px solid #b5b5b5; }
thead .corner { vertical-align: bottom; padding: 0 4px 4px 2px; }
thead .corner svg { margin-left: auto; }
thead .cur { background: #4b4b4b; border-bottom: 3px solid #20693f; }
thead .hidden-after { border-right: 5px solid #20693f; }
tbody th { height: 53px; vertical-align: bottom; padding-right: 4px; border-right: 1px solid #bbb; border-bottom: 2px solid #4a4a4a; }
tbody .cur { background: #4b4b4b; border-right: 3px solid #20693f; }
.tall th { height: 54px; }
td { padding: 0 0 0 4px; line-height: 40px; }
.ink { color: #000; }
.under { border-bottom: 2px solid #000; }
.head td { background: #393939; color: #fff; text-align: center; padding: 0; border-right: 2px solid #fff; border-bottom: 2px solid #fff; }
.head td.kb { border-bottom-color: #000; }
.head td.kr { border-right-color: #000; }
.n { font-size: 32px; }
.t td { border-right: 2px solid #000; }
.t td.blank { border-right: 0; }
.rule td { border-bottom: 2px solid #000; }
.rule td.nb, .rule td.a, .t td.free { border-bottom: 0; }
.t td.free { border-right: 0; }
.mid td { background: #d4d4d4; }
.light td { background: #ebebeb; }
.total td { background: #c4c4c4; }
.t td.b { background: #d4d4d4; }
.t td.c { background: #ebebeb; }
tr td.a { background: #fff; border-bottom: 0; border-right: 2px solid #000; }
.head td.a { background: #fff; border-bottom: 0; border-right-color: #000; }
.second td.a { border-right-color: #fff; }
.u { text-align: center; padding: 0; }
.no, .r { font-size: 32px; }
.r { text-align: right; padding: 0 4px 0 0; }
.p { padding-right: 6px; }
.neg { font-family: "Noto Sans CJK JP", sans-serif; font-size: 26px; }
.yellow { background: #ff0; }
.flag { background: linear-gradient(135deg, #0a7a0a 0 11px, transparent 12px); }
.host { position: relative; }
.selection { position: absolute; inset: -4px -2px -2px -4px; border: 4px solid #20693f; }
.selection::after { content: ""; position: absolute; right: -8px; bottom: -8px; width: 14px; height: 14px; border: 2px solid #fff; background: #20693f; }
.cursor { position: absolute; left: 104px; top: -14px; filter: drop-shadow(0 1px 2px #999); }

/* Sheet tabs */
.sheets { display: flex; height: 52px; flex: none; background: #2d2d2d; border-top: 2px solid #777; border-bottom: 1px solid #111; }
.pager { display: flex; gap: 32px; width: 116px; padding: 16px 0 0 28px; }
.pager .arrow { width: 14px; height: 20px; background: #ccc; }
.pager .off { background: #5a5a5a; }
.tabs { display: flex; flex: 1; min-width: 0; overflow: hidden; background: #1e1e1e; color: #888; font: 26px "Liberation Sans", "Noto Sans CJK JP", sans-serif; border-left: 2px solid #555; }
.tabs button { flex: none; min-width: 156px; height: 41px; padding: 0 27px 0 26px; border-right: 2px solid #555; line-height: 38px; }
.tabs .on { background: #fff; color: #1f7a45; font-weight: 700; border-radius: 0 0 4px 4px; border: 0; }
.add { display: flex; align-items: center; justify-content: center; width: 77px; height: 41px; border-left: 2px solid #555; border-right: 2px solid #555; }
.rest { width: 59px; }

/* Status bar */
.status { display: flex; align-items: center; height: 44px; flex: none; padding: 0 48px 0 46px; background: linear-gradient(#434343, #393939); border-bottom: 2px solid #555; font-size: 22px; }
.macro { margin-left: 39px; }
.views { display: flex; align-self: stretch; margin-left: auto; }
.views button { display: flex; align-items: center; justify-content: center; width: 70px; }
.views .on { background: #575757; }
.zoom-btn { margin: 0 16px; }
.zoom { appearance: none; width: 192px; height: 22px; background: linear-gradient(#6e6e6e, #6e6e6e) center / 100% 8px no-repeat; }
.zoom::-webkit-slider-thumb { appearance: none; width: 22px; height: 22px; border-radius: 50%; background: #c8c8c8; }
.status output { margin-left: 16px; font-family: "Noto Sans CJK JP", sans-serif; font-size: 24px; line-height: 32px; }
```
